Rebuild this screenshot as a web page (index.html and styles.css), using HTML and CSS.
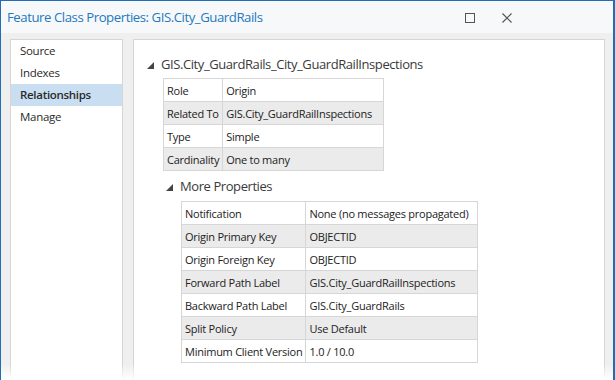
FILE: index.html
```html
<!DOCTYPE html>
<html lang="en">
<head>
    <meta charset="UTF-8">
    <title>Feature Class Properties</title>
    <link rel="stylesheet" href="styles.css">
</head>
<body>
    <div class="window">
        <header class="titlebar">
            <h1 class="title">Feature Class Properties: GIS.City_GuardRails</h1>
            <div class="controls">
                <svg class="ctl" width="12" height="12" viewBox="0 0 12 12"><rect x="1.5" y="1.5" width="9" height="9" fill="none" stroke="#555" stroke-width="1"/></svg>
                <svg class="ctl" width="12" height="12" viewBox="0 0 12 12"><path d="M1.5 1.5 L10.5 10.5 M10.5 1.5 L1.5 10.5" stroke="#555" stroke-width="1.2" fill="none"/></svg>
            </div>
        </header>

        <div class="content">
            <nav class="sidenav">
                <a href="#">Source</a>
                <a href="#">Indexes</a>
                <a href="#" class="active">Relationships</a>
                <a href="#">Manage</a>
            </nav>

            <main class="panel">
                <div class="group">
                    <div class="group-head">
                        <svg class="tri" width="7" height="7" viewBox="0 0 7 7"><polygon points="7,0 7,7 0,7" fill="#444"/></svg>
                        <span>GIS.City_GuardRails_City_GuardRailInspections</span>
                    </div>
                    <table class="props props-main">
                        <tr><td class="key">Role</td><td>Origin</td></tr>
                        <tr class="alt"><td class="key">Related To</td><td>GIS.City_GuardRailInspections</td></tr>
                        <tr><td class="key">Type</td><td>Simple</td></tr>
                        <tr class="alt"><td class="key">Cardinality</td><td>One to many</td></tr>
                    </table>

                    <div class="group sub">
                        <div class="group-head">
                            <svg class="tri" width="7" height="7" viewBox="0 0 7 7"><polygon points="7,0 7,7 0,7" fill="#444"/></svg>
                            <span>More Properties</span>
                        </div>
                        <table class="props props-more">
                            <tr><td class="key">Notification</td><td>None (no messages propagated)</td></tr>
                            <tr class="alt"><td class="key">Origin Primary Key</td><td>OBJECTID</td></tr>
                            <tr><td class="key">Origin Foreign Key</td><td>OBJECTID</td></tr>
                            <tr class="alt"><td class="key">Forward Path Label</td><td>GIS.City_GuardRailInspections</td></tr>
                            <tr><td class="key">Backward Path Label</td><td>GIS.City_GuardRails</td></tr>
                            <tr class="alt"><td class="key">Split Policy</td><td>Use Default</td></tr>
                            <tr><td class="key">Minimum Client Version</td><td>1.0 / 10.0</td></tr>
                        </table>
                    </div>
                </div>
            </main>
        </div>
        <div class="fade"></div>
    </div>
</body>
</html>
```

FILE: styles.css
```css
body {
    margin: 0;
    padding: 0;
    font-family: 'Open Sans', 'Noto Sans', sans-serif;
    color: #333;
}

.window {
    position: relative;
    width: 612px;
    height: 379px;
    border-top: 1px solid #1f6db5;
    border-left: 1px solid #1f6db5;
    border-right: 2px solid #1f6db5;
    background: #efefef;
    overflow: hidden;
    display: flex;
    flex-direction: column;
}

.titlebar {
    height: 32px;
    flex: none;
    background: #f7f8f9;
    display: flex;
    align-items: center;
    justify-content: space-between;
    padding-left: 6px;
}

.title {
    margin: 0;
    font-size: 13.2px;
    font-weight: normal;
    color: #2378c2;
    letter-spacing: -0.45px;
}

.controls {
    display: flex;
    gap: 25px;
    padding-right: 100px;
    padding-top: 1px;
}

.content {
    flex: 1;
    display: flex;
    gap: 10px;
    padding: 6px 8px 0 9px;
    min-height: 0;
}

.sidenav {
    width: 111px;
    background: #fff;
    border: 1px solid #d6d6d6;
    border-bottom: none;
    display: flex;
    flex-direction: column;
}

.sidenav a {
    height: 22px;
    line-height: 21px;
    padding-left: 9px;
    font-size: 11.5px;
    color: #2a2a2a;
    text-decoration: none;
    letter-spacing: -0.3px;
}

.sidenav a.active {
    background: #c9dff1;
    font-weight: 600;
}

.panel {
    flex: 1;
    background: #fff;
    border: 1px solid #d6d6d6;
    border-bottom: none;
    padding: 14px 0 0 13px;
}

.group-head {
    display: flex;
    align-items: center;
    gap: 7px;
    font-size: 13px;
    letter-spacing: -0.42px;
    color: #3a3a3a;
    height: 20px;
}

.tri {
    margin-top: 2px;
}

.props {
    border-collapse: collapse;
    font-size: 11px;
    letter-spacing: -0.25px;
    color: #222;
    border: 1px solid #c4c4c4;
}

.props td {
    border: 1px solid #d6d6d6;
    height: 22px;
    padding: 0 3px;
    white-space: nowrap;
}

.props tr.alt td {
    background: #ebebeb;
}

.props-main {
    margin: 4px 0 0 16px;
    width: 221px;
}

.props-main .key {
    width: 51px;
}

.sub {
    margin: 5px 0 0 19px;
}

.props-more {
    margin: 5px 0 0 15px;
    width: 297px;
}

.props-more .key {
    width: 116px;
}

.fade {
    position: absolute;
    left: 0;
    right: 0;
    bottom: 0;
    height: 16px;
    background: linear-gradient(rgba(255, 255, 255, 0), #fff);
}
```
